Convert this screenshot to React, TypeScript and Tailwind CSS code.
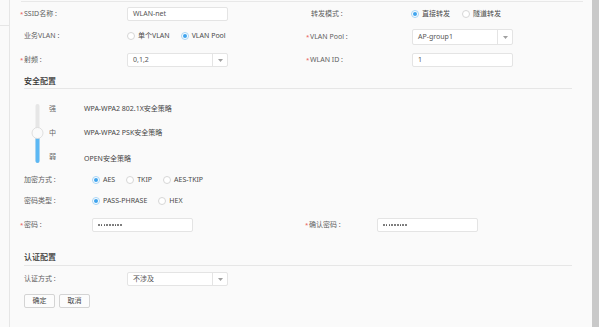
import React from "react";

const Radio = ({ checked, label }: { checked?: boolean; label: string }) => (
  <span className="inline-flex items-center">
    <span
      className={
        "flex w-[8px] h-[8px] items-center justify-center rounded-full border bg-white " +
        (checked ? "border-[#a8d4f4]" : "border-[#d6d6d6]")
      }
    >
      {checked && <span className="block w-[4px] h-[4px] rounded-full bg-[#3fa4ee]" />}
    </span>
    <span className="ml-[3px] text-[#4a4a4a]">{label}</span>
  </span>
);

const Req = () => <span className="-ml-[4px] w-[4px] text-[#e8554e] text-[6px]">*</span>;

const Dots = () => (
  <span className="flex gap-[1.2px]">
    {Array.from({ length: 9 }).map((_, i) => (
      <span key={i} className="block w-[1.6px] h-[1.6px] rounded-full bg-[#555]" />
    ))}
  </span>
);

const Input = ({ value, w = "w-[101px]", h = "h-[14px]", dots }: { value: string; w?: string; h?: string; dots?: boolean }) => (
  <div className={`${w} ${h} flex items-center rounded-[2px] border border-[#e4e4e4] bg-white pl-[5px] text-[#555]`}>
    {dots ? <Dots /> : value}
  </div>
);

const Select = ({ value, h = "h-[14px]" }: { value: string; h?: string }) => (
  <div className={`w-[101px] ${h} flex items-stretch rounded-[2px] border border-[#e4e4e4] bg-white text-[#555]`}>
    <div className="flex flex-1 items-center pl-[5px]">{value}</div>
    <div className="flex w-[15px] items-center justify-center border-l border-[#e4e4e4]">
      <svg width="5" height="3" viewBox="0 0 5 3">
        <polygon points="0,0 5,0 2.5,3" fill="#a0a0a0" />
      </svg>
    </div>
  </div>
);

export default function App() {
  return (
    <div
      className="flex w-[599px] h-[327px] overflow-hidden bg-[#fafafa] text-[7px] leading-[10px] text-[#606060]"
      style={{ fontFamily: '"Noto Sans", "Noto Sans CJK SC", sans-serif' }}
    >
      {/* left strip */}
      <div className="w-[10px] shrink-0 border-r border-[#e6e6e6]">
        <div className="h-[26px] border-b border-[#e6e6e6]" />
      </div>

      {/* main */}
      <div className="flex-1 min-w-0">
        <div className="ml-[11px] mt-[1px] w-[562px] border-t border-[#e8e8e8]" />

        <div className="pl-[14px]">
          {/* row 1 */}
          <div className="mt-[1px] flex h-[22px] items-center">
            <div className="flex w-[282px] items-center">
              <div className="flex w-[103px] items-center">
                <Req />
                SSID名称 :
              </div>
              <Input value="WLAN-net" />
            </div>
            <div className="flex items-center pl-[5px]">
              <div className="w-[100px]">转发模式 :</div>
              <div className="flex items-center gap-[12px]">
                <Radio checked label="直接转发" />
                <Radio label="隧道转发" />
              </div>
            </div>
          </div>

          {/* row 2 */}
          <div className="flex h-[22px] items-center">
            <div className="flex w-[282px] items-center">
              <div className="w-[103px]">业务VLAN :</div>
              <div className="flex items-center gap-[11px]">
                <Radio label="单个VLAN" />
                <Radio checked label="VLAN Pool" />
              </div>
            </div>
            <div className="mt-[2px] flex items-center pl-[4px]">
              <div className="flex w-[102px] items-center">
                <Req />
                VLAN Pool :
              </div>
              <Select value="AP-group1" h="h-[16px]" />
            </div>
          </div>

          {/* row 3 */}
          <div className="flex h-[26px] items-center">
            <div className="flex w-[282px] items-center">
              <div className="flex w-[103px] items-center">
                <Req />
                射频 :
              </div>
              <Select value="0,1,2" />
            </div>
            <div className="flex items-center pl-[4px]">
              <div className="flex w-[102px] items-center">
                <Req />
                WLAN ID :
              </div>
              <Input value="1" />
            </div>
          </div>

          {/* 安全配置 */}
          <div className="flex h-[16px] w-[548px] items-center border-b border-[#e6e6e6] text-[8px] font-medium text-[#333]">
            安全配置
          </div>

          <div className="flex pt-[8px]">
            <svg width="25" height="72" viewBox="0 0 25 72" className="shrink-0">
              <line x1="13.5" y1="9" x2="13.5" y2="64" stroke="#e6e6e6" strokeWidth="4" strokeLinecap="round" />
              <line x1="13.5" y1="36" x2="13.5" y2="64" stroke="#5cb8f4" strokeWidth="4" strokeLinecap="round" />
              <circle cx="13.5" cy="36" r="5.5" fill="#fafafa" stroke="#d8d8d8" strokeWidth="0.8" />
            </svg>
            <div className="w-[35px]">
              <div className="flex h-[24px] items-center text-[#666]">强</div>
              <div className="flex h-[24px] items-center text-[#666]">中</div>
              <div className="flex h-[24px] items-center text-[#666]">弱</div>
            </div>
            <div className="text-[#444]">
              <div className="flex h-[24px] items-center">WPA-WPA2 802.1X安全策略</div>
              <div className="flex h-[24px] items-center">WPA-WPA2 PSK安全策略</div>
              <div className="flex h-[24px] items-center pt-[3px]">OPEN安全策略</div>
            </div>
          </div>

          {/* 加密方式 */}
          <div className="flex h-[21px] items-center">
            <div className="w-[68px]">加密方式 :</div>
            <div className="flex items-center gap-[11px]">
              <Radio checked label="AES" />
              <Radio label="TKIP" />
              <Radio label="AES-TKIP" />
            </div>
          </div>

          {/* 密码类型 */}
          <div className="flex h-[22px] items-center">
            <div className="w-[68px]">密码类型 :</div>
            <div className="flex items-center gap-[11px]">
              <Radio checked label="PASS-PHRASE" />
              <Radio label="HEX" />
            </div>
          </div>

          {/* 密码 */}
          <div className="flex h-[26px] items-center">
            <div className="flex w-[282px] items-center">
              <div className="flex w-[68px] items-center">
                <Req />
                密码 :
              </div>
              <Input value="" dots />
            </div>
            <div className="flex items-center pl-[3px]">
              <div className="flex w-[68px] items-center">
                <Req />
                确认密码 :
              </div>
              <Input value="" dots />
            </div>
          </div>

          {/* 认证配置 */}
          <div className="flex h-[28px] w-[548px] items-center border-b border-[#e6e6e6] pt-[11px] text-[8px] font-medium text-[#333]">
            认证配置
          </div>

          <div className="flex h-[26px] items-center">
            <div className="w-[103px]">认证方式 :</div>
            <Select value="不涉及" />
          </div>

          <div className="mt-[2px] flex gap-[4px]">
            <button className="flex h-[14px] w-[31px] items-center justify-center rounded-[2px] border border-[#d4d4d4] bg-[#fcfcfc] text-[#444]">
              确定
            </button>
            <button className="flex h-[14px] w-[31px] items-center justify-center rounded-[2px] border border-[#d4d4d4] bg-[#fcfcfc] text-[#444]">
              取消
            </button>
          </div>
        </div>
      </div>

      {/* scrollbar */}
      <div className="ml-[9px] w-[7px] shrink-0 bg-[#c9c9c9]" />
    </div>
  );
}
